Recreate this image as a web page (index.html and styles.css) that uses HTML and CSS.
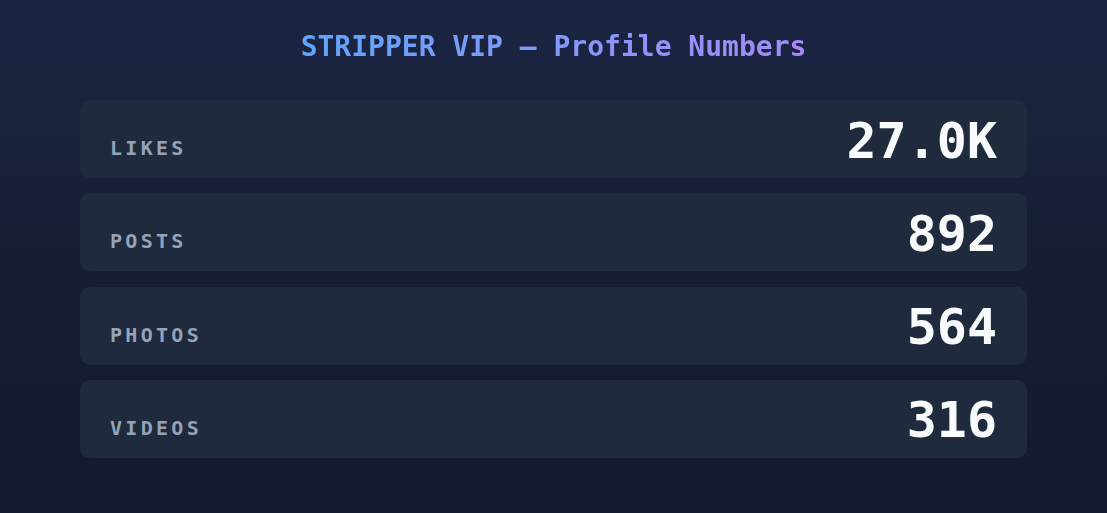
FILE: index.html
```html
<!DOCTYPE html>
<html lang="en">
<head>
<meta charset="utf-8">
<title>STRIPPER VIP — Profile Numbers</title>
<link rel="stylesheet" href="styles.css">
</head>
<body>
<main class="page">
  <h1 class="title">STRIPPER VIP — Profile Numbers</h1>
  <section class="stats">
    <div class="stat"><span class="label">Likes</span><span class="value">27.0K</span></div>
    <div class="stat"><span class="label">Posts</span><span class="value">892</span></div>
    <div class="stat"><span class="label">Photos</span><span class="value">564</span></div>
    <div class="stat"><span class="label">Videos</span><span class="value">316</span></div>
  </section>
</main>
</body>
</html>
```
FILE: styles.css
```css
html, body {
  margin: 0;
  height: 100%;
}
body {
  background: linear-gradient(180deg, #1b2542 0%, #161d33 60%, #141a2d 100%);
  font-family: "DejaVu Sans Mono", "Liberation Mono", monospace;
  color: #f8fafc;
}
.page {
  padding: 30px 80px 0;
  display: flex;
  flex-direction: column;
  align-items: stretch;
}
.title {
  margin: 0 0 36px;
  text-align: center;
  font-size: 28px;
  line-height: 34px;
  font-weight: bold;
  background: linear-gradient(90deg, #60a5fa 0%, #a78bfa 100%);
  -webkit-background-clip: text;
  background-clip: text;
  color: transparent;
  align-self: center;
}
.stats {
  display: flex;
  flex-direction: column;
  gap: 15.3px;
}
.stat {
  display: flex;
  justify-content: space-between;
  align-items: flex-end;
  height: 78px;
  box-sizing: border-box;
  padding: 0 30px 7.5px;
  background: #1f2a3c;
  border-radius: 10px;
}
.label {
  text-transform: uppercase;
  font-size: 20px;
  line-height: 24px;
  padding-bottom: 10.5px;
  font-weight: bold;
  letter-spacing: 3.3px;
  color: #94a3b8;
}
.value {
  font-size: 50px;
  line-height: 60px;
  font-weight: bold;
  color: #f8fafc;
}
```
